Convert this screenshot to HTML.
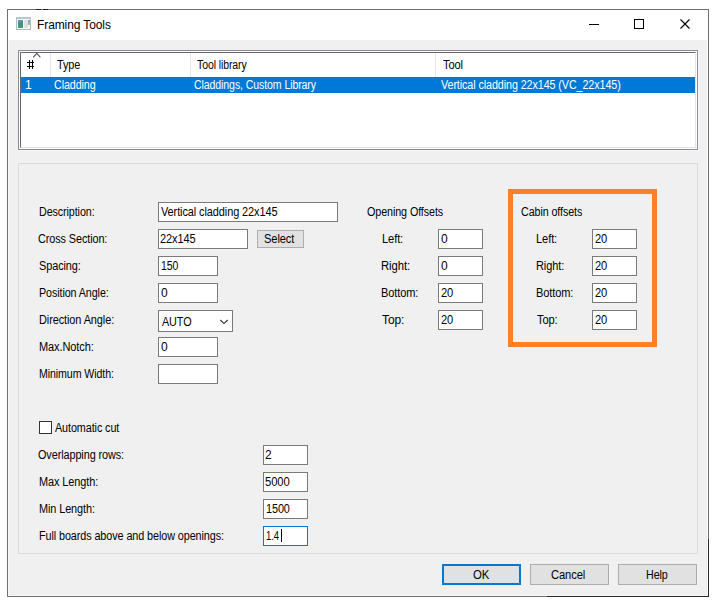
<!DOCTYPE html>
<html><head><meta charset="utf-8">
<style>
*{margin:0;padding:0;box-sizing:border-box}
html,body{width:713px;height:606px;overflow:hidden;background:#fff}
body{position:relative;font-family:"Liberation Sans",sans-serif;font-size:12px;color:#000}
.a{position:absolute}
.t{position:absolute;white-space:nowrap;line-height:14px;font-size:12px;transform-origin:0 0}
.tb{position:absolute;background:#fff;border:1px solid #7a7a7a;height:20px}
.btn{position:absolute;background:#e1e1e1;border:1px solid #adadad}
</style></head><body>
<!-- window frame -->
<div class="a" style="left:7px;top:9px;width:702px;height:588px;border:1px solid #707070;background:#fff"></div>
<div class="a" style="left:9px;top:40px;width:698px;height:555px;background:#f0f0f0"></div>

<div class="a" style="left:547px;top:596px;width:162px;height:1px;background:#2a2a2a"></div>
<div class="a" style="left:708px;top:539px;width:1px;height:58px;background:#2a2a2a"></div>
<div class="a" style="left:36px;top:9px;width:5px;height:1px;background:#222"></div>
<div class="a" style="left:43px;top:9px;width:5px;height:1px;background:#222"></div>
<div class="a" style="left:8px;top:40px;width:1px;height:556px;background:#f7f7f7"></div>
<div class="a" style="left:8px;top:595px;width:700px;height:1px;background:#f7f7f7"></div>
<!-- title bar -->
<div class="a" style="left:16px;top:17px;width:15px;height:13px;border:1px solid #b4b8c0;border-top:2px solid #c0c4cc;background:#f8f8f8"></div>
<div class="a" style="left:18px;top:20px;width:5px;height:8px;background:linear-gradient(#6a94c8,#3c8f8a 45%,#45a65c)"></div>
<div class="a" style="left:24px;top:20px;width:1px;height:8px;background:#e4e0ee"></div>
<div class="a" style="left:25px;top:20px;width:3px;height:8px;background:#e0e0e0"></div>
<div class="a" style="left:28px;top:20px;width:2px;height:5px;background:linear-gradient(#7fa8d8,#8fd088)"></div>
<svg class="a" style="left:0;top:0" width="713" height="40">
  <line x1="589" y1="24.5" x2="599" y2="24.5" stroke="#000" stroke-width="1"/>
  <rect x="634.5" y="19.5" width="9" height="9" fill="none" stroke="#000" stroke-width="1"/>
  <path d="M680.5 19.5 L689.5 28.5 M689.5 19.5 L680.5 28.5" stroke="#000" stroke-width="1.1" fill="none"/>
</svg>

<!-- listview -->
<div class="a" style="left:18px;top:50px;width:680px;height:100px;border:1px solid #868b94;box-shadow:1px 1px 0 #f8f8f8"></div>
<div class="a" style="left:19px;top:51px;width:678px;height:98px;background:#fff"></div>
<div class="a" style="left:20px;top:52px;width:676px;height:96px;border-left:1px solid #696969;border-top:1px solid #696969;border-right:1px solid #e3e3e3;border-bottom:1px solid #e3e3e3;background:#fff"></div>
<div class="a" style="left:50px;top:53px;width:1px;height:24px;background:#e5e5e5"></div>
<div class="a" style="left:190px;top:53px;width:1px;height:24px;background:#e5e5e5"></div>
<div class="a" style="left:435px;top:53px;width:1px;height:24px;background:#e5e5e5"></div>
<svg class="a" style="left:32px;top:52px" width="10" height="7"><path d="M1.2 5.3 L4.8 1.4 L8.4 5.3" stroke="#555" stroke-width="1.1" fill="none"/></svg>
<div class="a" style="left:29px;top:60px;width:1px;height:9px;background:#000"></div>
<div class="a" style="left:32px;top:60px;width:1px;height:9px;background:#000"></div>
<div class="a" style="left:27px;top:62px;width:7px;height:1px;background:#000"></div>
<div class="a" style="left:27px;top:66px;width:7px;height:1px;background:#000"></div>
<div class="a" style="left:21px;top:77px;width:674px;height:16px;background:#0078d7"></div>

<!-- panel -->
<div class="a" style="left:18px;top:163px;width:680px;height:391px;border:1px solid #dadada"></div>

<!-- left column controls -->
<div class="tb" style="left:158px;top:202px;width:180px"></div>
<div class="tb" style="left:158px;top:229px;width:90px"></div>
<div class="btn" style="left:257px;top:230px;width:47px;height:18px"></div>
<div class="tb" style="left:158px;top:256px;width:60px"></div>
<div class="tb" style="left:158px;top:283px;width:60px"></div>
<div class="tb" style="left:158px;top:310px;width:75px;height:22px"></div>
<svg class="a" style="left:218px;top:317px" width="12" height="9"><path d="M2.3 3 L6 6.6 L9.7 3" stroke="#333" stroke-width="1.1" fill="none"/></svg>
<div class="tb" style="left:158px;top:337px;width:60px"></div>
<div class="tb" style="left:158px;top:364px;width:60px"></div>

<!-- opening offsets -->
<div class="tb" style="left:438px;top:229px;width:45px"></div>
<div class="tb" style="left:438px;top:256px;width:45px"></div>
<div class="tb" style="left:438px;top:283px;width:45px"></div>
<div class="tb" style="left:438px;top:310px;width:45px"></div>

<!-- cabin offsets -->
<div class="a" style="left:508px;top:189px;width:149px;height:158px;border:5px solid #ff7f27"></div>
<div class="tb" style="left:592px;top:229px;width:45px"></div>
<div class="tb" style="left:592px;top:256px;width:45px"></div>
<div class="tb" style="left:592px;top:283px;width:45px"></div>
<div class="tb" style="left:592px;top:310px;width:45px"></div>

<!-- bottom section -->
<div class="a" style="left:39px;top:421px;width:13px;height:13px;border:1px solid #333;background:#fff"></div>
<div class="tb" style="left:263px;top:445px;width:45px"></div>
<div class="tb" style="left:263px;top:472px;width:45px"></div>
<div class="tb" style="left:263px;top:499px;width:45px"></div>
<div class="tb" style="left:263px;top:526px;width:45px;border-color:#0078d7"></div>
<div class="a" style="left:281px;top:529px;width:1px;height:13px;background:#000"></div>

<!-- buttons -->
<div class="btn" style="left:442px;top:564px;width:79px;height:21px;border:2px solid #0078d7"></div>
<div class="btn" style="left:530px;top:564px;width:79px;height:21px"></div>
<div class="btn" style="left:618px;top:564px;width:79px;height:21px"></div>

<div class="t" style="left:37px;top:18px;letter-spacing:-0.1px">Framing Tools</div>
<div class="t" style="left:57px;top:58px;letter-spacing:-0.1px;transform:scaleX(0.9048)">Type</div>
<div class="t" style="left:197px;top:58px;letter-spacing:-0.1px;transform:scaleX(0.8738)">Tool library</div>
<div class="t" style="left:443px;top:58px;letter-spacing:-0.1px;transform:scaleX(0.9238)">Tool</div>
<div class="t" style="left:25px;top:78px;color:#fff">1</div>
<div class="t" style="left:54px;top:78px;letter-spacing:-0.1px;transform:scaleX(0.8933);color:#fff">Cladding</div>
<div class="t" style="left:194px;top:78px;letter-spacing:-0.1px;transform:scaleX(0.8782);color:#fff">Claddings, Custom Library</div>
<div class="t" style="left:441px;top:78px;letter-spacing:-0.1px;transform:scaleX(0.8960);color:#fff">Vertical cladding 22x145 (VC_22x145)</div>
<div class="t" style="left:39px;top:205px;letter-spacing:-0.1px;transform:scaleX(0.8934)">Description:</div>
<div class="t" style="left:38px;top:232px;letter-spacing:-0.1px;transform:scaleX(0.9039)">Cross Section:</div>
<div class="t" style="left:39px;top:259px;letter-spacing:-0.1px;transform:scaleX(0.9092)">Spacing:</div>
<div class="t" style="left:39px;top:286px;letter-spacing:-0.1px;transform:scaleX(0.8947)">Position Angle:</div>
<div class="t" style="left:39px;top:313px;letter-spacing:-0.1px;transform:scaleX(0.9110)">Direction Angle:</div>
<div class="t" style="left:39px;top:340px;letter-spacing:-0.1px;transform:scaleX(0.9172)">Max.Notch:</div>
<div class="t" style="left:39px;top:367px;letter-spacing:-0.1px;transform:scaleX(0.8843)">Minimum Width:</div>
<div class="t" style="left:161px;top:205px;letter-spacing:-0.1px;transform:scaleX(0.9119)">Vertical cladding 22x145</div>
<div class="t" style="left:160px;top:232px;letter-spacing:-0.1px;transform:scaleX(0.9137)">22x145</div>
<div class="t" style="left:161px;top:259px;letter-spacing:-0.1px;transform:scaleX(0.8737)">150</div>
<div class="t" style="left:161px;top:286px">0</div>
<div class="t" style="left:162px;top:315px;letter-spacing:-0.1px;transform:scaleX(0.9003)">AUTO</div>
<div class="t" style="left:161px;top:340px">0</div>
<div class="t" style="left:264px;top:232px;letter-spacing:-0.1px;transform:scaleX(0.9250)">Select</div>
<div class="t" style="left:367px;top:205px;letter-spacing:-0.1px;transform:scaleX(0.8952)">Opening Offsets</div>
<div class="t" style="left:382px;top:232px;letter-spacing:-0.1px;transform:scaleX(0.9238)">Left:</div>
<div class="t" style="left:381px;top:259px;letter-spacing:-0.1px;transform:scaleX(0.9448)">Right:</div>
<div class="t" style="left:381px;top:286px;letter-spacing:-0.1px;transform:scaleX(0.9179)">Bottom:</div>
<div class="t" style="left:382px;top:313px;letter-spacing:-0.1px">Top:</div>
<div class="t" style="left:441px;top:232px">0</div>
<div class="t" style="left:441px;top:259px">0</div>
<div class="t" style="left:441px;top:286px;letter-spacing:-0.1px;transform:scaleX(0.9300)">20</div>
<div class="t" style="left:441px;top:313px;letter-spacing:-0.1px;transform:scaleX(0.9300)">20</div>
<div class="t" style="left:521px;top:205px;letter-spacing:-0.1px;transform:scaleX(0.8928)">Cabin offsets</div>
<div class="t" style="left:536px;top:232px;letter-spacing:-0.1px;transform:scaleX(0.9238)">Left:</div>
<div class="t" style="left:536px;top:259px;letter-spacing:-0.1px;transform:scaleX(0.9172)">Right:</div>
<div class="t" style="left:536px;top:286px;letter-spacing:-0.1px;transform:scaleX(0.9179)">Bottom:</div>
<div class="t" style="left:537px;top:313px;letter-spacing:-0.1px;transform:scaleX(0.9253)">Top:</div>
<div class="t" style="left:595px;top:232px;letter-spacing:-0.1px;transform:scaleX(0.9300)">20</div>
<div class="t" style="left:595px;top:259px;letter-spacing:-0.1px;transform:scaleX(0.9300)">20</div>
<div class="t" style="left:595px;top:286px;letter-spacing:-0.1px;transform:scaleX(0.9300)">20</div>
<div class="t" style="left:595px;top:313px;letter-spacing:-0.1px;transform:scaleX(0.9300)">20</div>
<div class="t" style="left:55px;top:421px;letter-spacing:-0.1px;transform:scaleX(0.8999)">Automatic cut</div>
<div class="t" style="left:38px;top:448px;letter-spacing:-0.1px;transform:scaleX(0.9054)">Overlapping rows:</div>
<div class="t" style="left:39px;top:475px;letter-spacing:-0.1px;transform:scaleX(0.9111)">Max Length:</div>
<div class="t" style="left:39px;top:502px;letter-spacing:-0.1px;transform:scaleX(0.9066)">Min Length:</div>
<div class="t" style="left:39px;top:529px;letter-spacing:-0.1px;transform:scaleX(0.9015)">Full boards above and below openings:</div>
<div class="t" style="left:265px;top:448px">2</div>
<div class="t" style="left:265px;top:475px;letter-spacing:-0.1px;transform:scaleX(0.9360)">5000</div>
<div class="t" style="left:266px;top:502px;letter-spacing:-0.1px;transform:scaleX(0.9040)">1500</div>
<div class="t" style="left:266px;top:529px;letter-spacing:-0.1px;transform:scaleX(0.7883)">1.4</div>
<div class="t" style="left:473px;top:568px;letter-spacing:-0.1px;transform:scaleX(0.9500)">OK</div>
<div class="t" style="left:551px;top:568px;letter-spacing:-0.1px;transform:scaleX(0.9318)">Cancel</div>
<div class="t" style="left:646px;top:568px;letter-spacing:-0.1px;transform:scaleX(0.8957)">Help</div>
</body></html>
